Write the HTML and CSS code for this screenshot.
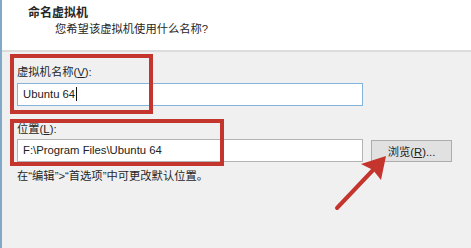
FILE: index.html
```html
<!DOCTYPE html>
<html lang="zh-CN">
<head>
    <meta charset="UTF-8">
    <meta name="viewport" content="width=device-width, initial-scale=1.0">
    <title>新建虚拟机向导</title>
    <link rel="stylesheet" href="styles.css">
</head>
<body>
    <div class="dialog">
        <div class="header">
            <div class="title">命名虚拟机</div>
            <div class="subtitle">您希望该虚拟机使用什么名称?</div>
        </div>
        <div class="content">
            <div class="label">虚拟机名称(<u>V</u>):</div>
            <div class="field focused">Ubuntu 64<span class="caret"></span></div>

            <div class="label second">位置(<u>L</u>):</div>
            <div class="row">
                <div class="field">F:\Program Files\Ubuntu 64</div>
                <button class="browse">浏览(<u>R</u>)...</button>
            </div>
            <div class="hint">在“编辑”&gt;“首选项”中可更改默认位置。</div>
        </div>

        <!-- annotations drawn over the dialog -->
        <div class="mark mark-name"></div>
        <div class="mark mark-path"></div>
        <svg class="arrow" width="471" height="248" viewBox="0 0 471 248">
            <line x1="337" y1="208" x2="374" y2="169" stroke="#c4352d" stroke-width="4" stroke-linecap="round"/>
            <path d="M386 156 L361 164 L373 170 L381 180 Z" fill="#c4352d"/>
        </svg>
    </div>
</body>
</html>
```

FILE: styles.css
```css
body {
    margin: 0;
    font-family: "Liberation Sans", "Noto Sans CJK SC", sans-serif;
    font-size: 11.3px;
    color: #262626;
}
.dialog {
    position: relative;
    width: 471px;
    height: 248px;
    box-sizing: border-box;
    border-left: 2px solid #7fa8c9;
    background: #f0f0f0;
    overflow: hidden;
}
.header {
    height: 52px;
    box-sizing: border-box;
    padding: 5px 0 0 26px;
    background: #fff;
    border-bottom: 2px solid #dcdcdc;
}
.title {
    font-size: 12px;
    font-weight: bold;
    line-height: 16px;
}
.subtitle {
    margin-left: 27px;
    line-height: 16px;
}
.content {
    padding: 12px 0 0 15px;
}
.label {
    line-height: 16px;
    margin-bottom: 3px;
}
.label.second {
    margin-top: 15px;
    margin-bottom: 2px;
}
.field {
    width: 346px;
    height: 23px;
    box-sizing: border-box;
    padding: 0 5px;
    border: 1px solid #b4b4b4;
    background: #fff;
    line-height: 21px;
    color: #222;
}
.field.focused {
    border-color: #84b3dc;
}
.caret {
    display: inline-block;
    width: 1px;
    height: 14px;
    margin-left: 1px;
    vertical-align: -3px;
    background: #111;
}
.row {
    display: flex;
    align-items: flex-start;
    gap: 8px;
}
.browse {
    width: 81px;
    height: 22px;
    margin-top: 1px;
    padding: 0;
    font: inherit;
    color: #222;
    background: #e1e1e1;
    border: 1px solid #adadad;
}
.hint {
    margin-top: 6px;
    line-height: 16px;
}
.mark {
    position: absolute;
    border: 4px solid #c4352d;
}
.mark-name {
    left: 8px;
    top: 54px;
    width: 135px;
    height: 52px;
}
.mark-path {
    left: 8px;
    top: 119px;
    width: 206px;
    height: 39px;
}
.arrow {
    position: absolute;
    left: -2px;
    top: 0;
}
```
